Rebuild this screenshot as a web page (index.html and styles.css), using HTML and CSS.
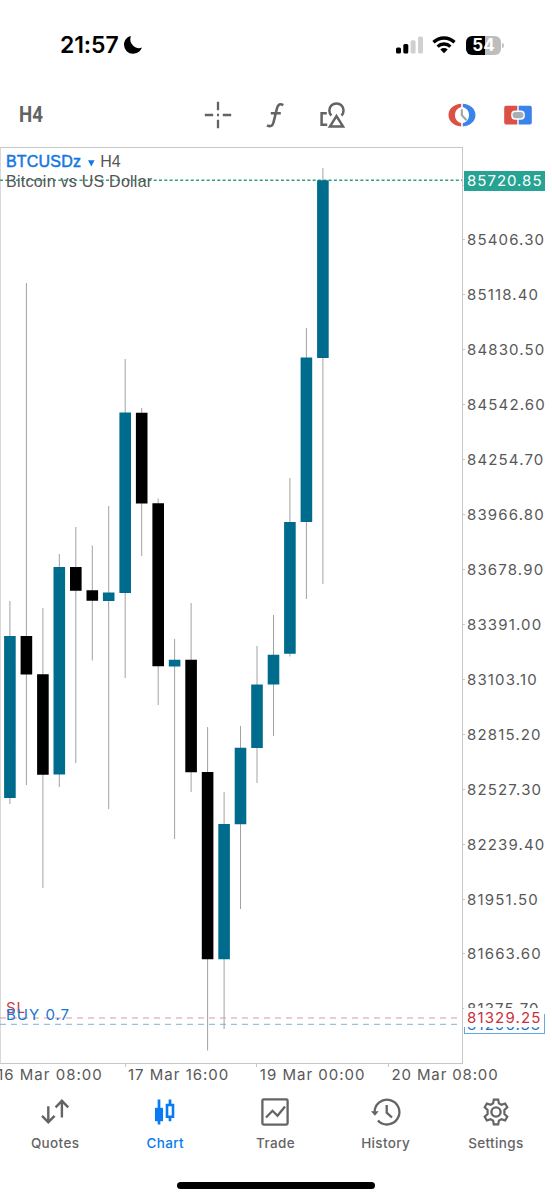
FILE: index.html
```html
<!DOCTYPE html>
<html lang="en">
<head>
<meta charset="utf-8">
<title>BTCUSDz H4</title>
<link rel="stylesheet" href="styles.css">
</head>
<body>
<div class="screen">
  <header class="status">
    <div class="status-left">
      <span class="clock">21:57</span>
      <svg class="moon" viewBox="0 0 18 18"><path d="M6 .2C2.300 1.500 0 5 0 8.800A9 9 0 0 0 9 17.800C13 17.800 16.600 15.400 18 11.600C15.200 12.800 11.600 12.300 9.200 9.800C6.400 7 5.500 3.400 6.900.2Z"/></svg>
    </div>
    <div class="status-right">
      <svg class="signal" viewBox="0 0 28 18"><rect x="0" y="11.500" width="5" height="6" rx="1.500"/><rect x="7.300" y="8" width="5" height="9.500" rx="1.500"/><g fill="#d0d0d0"><rect x="14.600" y="4.200" width="5" height="13.300" rx="1.500"/><rect x="22" y=".5" width="5" height="17" rx="1.500"/></g></svg>
      <svg class="wifi" viewBox="0 0 24 18"><g fill="none" stroke="#000" stroke-width="3.300"><path d="M1.500 6.300a15 15 0 0 1 21 0"/><path d="M5.600 10.600a9.200 9.200 0 0 1 12.800 0"/></g><path d="M8.300 13.500a5.400 5.400 0 0 1 7.400 0L12 17.300Z"/></svg>
      <div class="battery"><span class="battery-level">54</span><i class="battery-tip"></i></div>
    </div>
  </header>

  <div class="toolbar">
    <span class="timeframe">H4</span>
    <div class="tools">
      <svg class="icon" viewBox="0 0 28 28"><path d="M14 .8v8.400M14 18.800v8.400M.8 14h8.400M18.800 14h8.400M13 14h2" stroke-width="2.300"/></svg>
      <svg class="icon" viewBox="0 0 28 28"><path d="M22.300 4.200C19.300 2.300 17 3.200 16 7.200L12.400 21.800C11.600 25 9.300 26 6 24.300M9.800 12.200h10" stroke-width="2.600"/></svg>
      <svg class="icon" viewBox="0 0 28 28"><path d="M12.400 14.500A7.100 7.100 0 1 1 22.500 14.500M7.800 12.300H2.600v11.400h5.600" stroke-width="2.500"/><path d="M17.500 15.200 24 25.400H11Z" stroke-width="2.500"/></svg>
    </div>
    <div class="tools tools-trade">
      <svg class="icon" viewBox="0 0 28 28"><g stroke="none"><path fill="#db5145" d="M13.200 2.800v3.100a8.500 8.500 0 0 0 0 16.400v3.100C6.500 25.200.5 20.800.5 14.100S6.500 3 13.200 2.800Z"/><path fill="#3b82ed" d="M14.800 2.800v3.100a8.500 8.500 0 0 1 0 16.400v3.100c6.700-.2 12.700-4.600 12.700-11.300S21.500 3 14.800 2.800Z"/></g><path d="M13.800 8.200v6l4.700 5" stroke="#9ba1a5" stroke-width="2"/></svg>
      <svg class="icon" viewBox="0 0 28 28"><g stroke="none"><path fill="#db5145" d="M2 4.700h11.300v18.800H2A2 2 0 0 1 .2 21.500V6.700a2 2 0 0 1 1.800-2Z"/><path fill="#3b82ed" d="M14.700 4.700H26a2 2 0 0 1 1.800 2v14.800a2 2 0 0 1-1.800 2H14.700Z"/><rect x="7.200" y="9.500" width="13.600" height="9.200" rx="4" fill="#fff"/><rect x="8.500" y="11" width="11" height="6.200" rx="3.100" fill="#a5afb6"/></g></svg>
    </div>
  </div>

  <main class="chart">
    <div class="plot">
      <svg class="candles" viewBox="0 147 463 917">
        <g class="wicks">
          <path d="M9.900 601V804M26.400 283V785M42.900 608V888M59.300 554V787M75.800 527V763M92.300 545.500V660.500M108.700 506V809M125.200 359V678M141.700 408V556M158.200 498.500V705M174.600 639V839M191.100 603V792M207.600 727V1050.500M224.100 792V1029M240.500 726V909M257 646V783M273.500 615V736M289.900 478V656.500M306.400 328V599M322.900 168V584"/>
        </g>
        <path class="line-sl" d="M0 1018H462"/>
        <path class="line-buy" d="M0 1024.300H462"/>
        <path class="line-price" d="M0 180.300H462"/>
        <g class="bull">
          <path d="M9.900 636V798M59.300 567V774.500M108.700 592.500V601M125.200 412.500V593M174.600 659.800V666.500M224.100 824V959.300M240.500 747.700V824.200M257 684.500V748M273.500 654.700V684.500M289.900 522V653.700M306.400 357.500V522M322.900 180.300V358"/>
        </g>
        <g class="bear">
          <path d="M26.400 636V674.500M42.900 674.200V774.700M75.800 567V590.700M92.300 590.300V600.700M141.700 412.700V503.500M158.200 503.300V666.300M191.100 659.800V772.200M207.600 772V959.300"/>
        </g>
      </svg>
      <div class="caption">
        <div class="symbol"><b>BTCUSDz</b><svg class="caret" viewBox="0 0 7 7"><path d="M0 .3h6.600L3.300 6.500Z"/></svg><span>H4</span></div>
        <div class="name">Bitcoin vs US Dollar</div>
      </div>
      <span class="order order-sl">SL</span>
      <span class="order order-buy">BUY 0.7</span>
    </div>
    <div class="prices">
      <span>85694.20</span><span>85406.30</span><span>85118.40</span><span>84830.50</span><span>84542.60</span><span>84254.70</span><span>83966.80</span><span>83678.90</span><span>83391.00</span><span>83103.10</span><span>82815.20</span><span>82527.30</span><span>82239.40</span><span>81951.50</span><span>81663.60</span><span>81375.70</span>
      <div class="tag tag-last">85720.85</div>
      <div class="tag tag-buy">81296.38</div>
      <div class="tag tag-sl">81329.25</div>
    </div>
    <div class="times"><span>16 Mar 08:00</span><span>17 Mar 16:00</span><span>19 Mar 00:00</span><span>20 Mar 08:00</span></div>
  </main>

  <nav class="tabs">
    <a class="tab"><svg class="icon" viewBox="0 0 28 28"><path d="M7.300 8.200v15.500M1 17.800l6.300 6.400 6.300-6.400M20.900 19.500V3M14.600 9.300l6.300-6.500 6.300 6.500" stroke-width="2.400"/></svg><span>Quotes</span></a>
    <a class="tab active"><svg class="icon" viewBox="0 0 28 28"><path d="M8 1.600V26.400M19 1.600V6M19 19.500v3.700" stroke-width="2.700"/><path d="M4 9.800h8v13.400H4Z" fill="currentColor" stroke="none"/><path d="M16 7h6v11.800h-6Z" stroke-width="2.600"/></svg><span>Chart</span></a>
    <a class="tab"><svg class="icon" viewBox="0 0 28 28"><rect x="1.400" y="1.400" width="25.200" height="25.200" rx="1.300" stroke-width="2.300"/><path d="M5 19.500l6.500-6.700 5 5L24 8.500" stroke-width="2.300"/></svg><span>Trade</span></a>
    <a class="tab"><svg class="icon" viewBox="0 0 28 28"><path d="M2.600 14.500A12.400 12.400 0 1 1 5.900 22.500" stroke-width="2.300"/><path d="M-1 13.300h7.800L2.900 17.800Z" fill="currentColor" stroke="none"/><path d="M14.700 7v7.700l5.300 4.800" stroke-width="2.300"/></svg><span>History</span></a>
    <a class="tab"><svg class="icon" viewBox="0 0 28 28"><path d="M11.800 1.600h4.400l.7 3.800 2.500 1.400 3.700-1.300 2.200 3.800-2.900 2.600v4.200l2.900 2.600-2.200 3.800-3.700-1.300-2.500 1.400-.7 3.800h-4.400l-.7-3.800-2.500-1.400-3.700 1.300-2.200-3.800 2.900-2.600v-4.200L2.700 9.300l2.200-3.800 3.700 1.300 2.500-1.400Z" stroke-width="2.200"/><circle cx="14" cy="14" r="4.600" stroke-width="2.300"/></svg><span>Settings</span></a>
  </nav>
  <div class="home"></div>
</div>
</body>
</html>
```
FILE: styles.css
```css
* { box-sizing: border-box; }
body { margin: 0; background: #fff; font-family: Inter, "Liberation Sans", sans-serif; }
.screen { width: 552px; height: 1200px; overflow: hidden; display: flex; flex-direction: column; background: #fff; color: #585858; }

.status { height: 90px; padding: 0 51px 0 60px; display: flex; justify-content: space-between; align-items: center; color: #000; }
.status-left, .status-right { display: flex; align-items: center; }
.clock { font-size: 23px; font-weight: 600; line-height: 28px; letter-spacing: -0.100px; }
.moon { width: 18px; height: 18px; margin-left: 5px; }
.signal { width: 28px; height: 18px; }
.wifi { width: 24px; height: 18px; margin-left: 8px; }
.battery { position: relative; width: 35px; height: 19px; margin-left: 10px; border-radius: 6px; background: linear-gradient(90deg, #000 55%, #bdbdbd 55%); display: flex; justify-content: center; align-items: center; }
.battery-level { color: #fff; font-size: 17px; line-height: 19px; font-weight: 700; }
.battery-tip { position: absolute; right: -3px; top: 7px; width: 2px; height: 5px; border-radius: 0 2px 2px 0; background: #c4c4c4; }

.icon { display: block; width: 28px; height: 28px; overflow: visible; fill: none; stroke: currentColor; }
.toolbar { height: 57px; padding: 0 20px 7px 19px; display: flex; align-items: center; color: #636363; }
.timeframe { width: 185px; font: 700 22px/26px Roboto, sans-serif; transform: scaleX(0.85); transform-origin: left; }
.tools { display: flex; gap: 29.300px; }
.tools-trade { margin-left: auto; gap: 28.500px; }

.chart { display: grid; grid-template-columns: 463px 89px; grid-template-rows: 917px 22px; }
.plot { position: relative; border: 1px solid #c6c6c6; border-left-color: #d8d8d8; }
.candles { position: absolute; left: -1px; top: -1px; width: 463px; height: 917px; fill: none; }
.wicks { stroke: #a2a2a2; stroke-width: 1; }
.bull { stroke: #006c8d; stroke-width: 11.600; }
.bear { stroke: #000; stroke-width: 11.600; }
.line-price { stroke: #329d7e; stroke-width: 1.500; stroke-dasharray: 3 2.300; }
.line-sl { stroke: #d69ba0; stroke-width: 1; stroke-dasharray: 6 5; }
.line-buy { stroke: #82b1d6; stroke-width: 1; stroke-dasharray: 6 5; }
.caption { position: relative; padding: 4px 0 0 5px; font: 16px/20px "Liberation Sans", Arial, sans-serif; color: #555; }
.symbol { display: flex; align-items: center; }
.symbol b { font-weight: 400; color: #1677df; -webkit-text-stroke: 0.500px #1677df; letter-spacing: 0.200px; }
.caret { width: 7px; height: 7px; margin: 2px 5px 0 7px; fill: #1677df; }
.name { letter-spacing: 0.250px; }
.order { position: absolute; left: 5px; font-size: 15px; line-height: 18px; letter-spacing: 1px; }
.order-sl { top: 851px; color: #c9404a; }
.order-buy { top: 858px; color: #1b76d0; }

.prices { position: relative; padding-top: 10.600px; font-size: 15px; letter-spacing: 1.150px; }
.prices span { display: flex; align-items: center; height: 54.930px; padding-left: 4px; }
.prices span::before { content: ""; position: relative; left: -4px; width: 2px; height: 1px; margin-right: -2px; background: #c6c6c6; }
.tag { position: absolute; left: 1px; width: 81px; height: 19px; padding-left: 3px; line-height: 19px; background: #fff; }
.tag-last { top: 24px; height: 20px; background: #27a393; color: #fff; letter-spacing: 1px; }
.tag-buy { top: 867px; height: 20px; border: 1px solid #65a9e2; padding-left: 2px; line-height: 20px; color: #1b76d0; }
.tag-sl { top: 861px; width: 80px; color: #c9303b; }

.times { grid-column: 1 / 3; display: flex; padding-left: 124.500px; font-size: 15px; line-height: 22px; letter-spacing: 1px; white-space: nowrap; }
.times span { width: 131.800px; flex: none; padding-left: 3.500px; background: linear-gradient(#c6c6c6, #c6c6c6) 0 0 / 1px 3px no-repeat; }
.times span:first-child { margin-left: -131.800px; padding-left: 4.500px; }
.times span:last-child { letter-spacing: 0.850px; }

.tabs { display: grid; grid-template-columns: repeat(5, 1fr); height: 96px; padding: 12px 1px 0 0; flex: none; }
.tab { display: flex; flex-direction: column; align-items: center; gap: 8px; color: #646464; font-size: 13.500px; line-height: 18px; font-weight: 500; letter-spacing: 0.350px; }
.tab.active { color: #087bf3; }
.home { width: 198px; height: 7px; margin: 0 auto; border-radius: 4px; background: #000; }
```
